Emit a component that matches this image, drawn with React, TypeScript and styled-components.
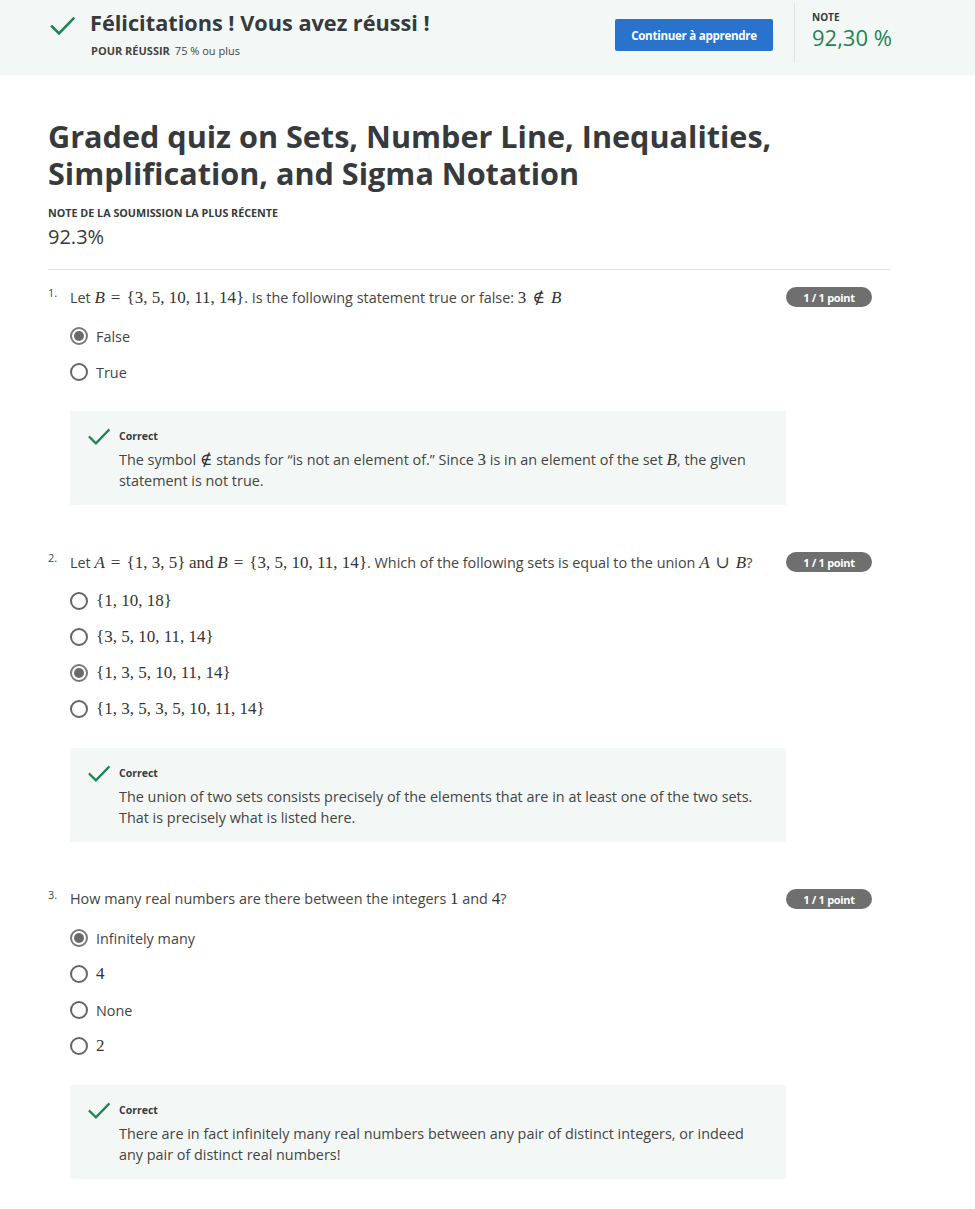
import React from "react";
import styled, { createGlobalStyle } from "styled-components";

const Global = createGlobalStyle`
  html, body { margin: 0; padding: 0; background: #fff; }
  body { font-family: "Open Sans", "Noto Sans", sans-serif; color: #373a3c; }
  * { box-sizing: border-box; }
`;

const Header = styled.header`
  height: 75px;
  background: #f3f8f6;
  display: flex;
  align-items: flex-start;
  padding-left: 50px;
`;

const HeaderLeft = styled.div`
  display: flex;
  align-items: flex-start;
  gap: 15px;
  padding-top: 14px;
  flex: 1;
`;

const CheckWrap = styled.div`
  padding-top: 2px;
`;

const HeaderTitle = styled.div`
  font-size: 21.7px;
  font-weight: 700;
  color: #373a3c;
  line-height: 18px;
`;

const HeaderSub = styled.div`
  margin-top: 11px;
  font-size: 11px;
  color: #444;
  display: flex;
  gap: 5px;
  padding-left: 1px;
  b { font-weight: 700; }
`;

const ContinueButton = styled.button`
  margin-top: 19px;
  width: 158px;
  height: 32px;
  border: none;
  border-radius: 2px;
  background: #2a73cc;
  color: #fff;
  font-family: "Open Sans", sans-serif;
  font-size: 11.6px;
  font-weight: 700;
  letter-spacing: -0.3px;
`;

const GradeBox = styled.div`
  margin-left: 21px;
  margin-top: 3px;
  height: 60px;
  width: 181px;
  border-left: 1px solid #dfe3e1;
  padding-left: 17px;
  padding-top: 8px;
  display: flex;
  flex-direction: column;
  gap: 2px;
`;

const GradeLabel = styled.div`
  font-size: 10px;
  font-weight: 700;
  color: #373a3c;
  line-height: 12px;
`;

const GradeValue = styled.div`
  font-size: 22px;
  color: #1f8354;
  line-height: 24px;
`;

const Main = styled.main`
  padding: 43px 85px 40px 48px;
`;

const Title = styled.h1`
  margin: 0;
  font-size: 30.6px;
  font-weight: 700;
  line-height: 37px;
  color: #373a3c;
`;

const SmallCaps = styled.div`
  margin-top: 14px;
  font-size: 10.75px;
  font-weight: 700;
  color: #373a3c;
`;

const Score = styled.div`
  font-size: 20px;
  line-height: 26px;
  margin-top: 4px;
  color: #373a3c;
`;

const Rule = styled.hr`
  border: none;
  border-top: 1px solid #e1e1e1;
  margin: 19px 0 0 0;
`;

const Question = styled.section<{ $first?: boolean }>`
  margin-top: ${(p) => (p.$first ? "17px" : "47px")};
  padding-right: 18px;
`;

const QRow = styled.div`
  display: flex;
  align-items: center;
  height: 20px;
`;

const QNum = styled.span`
  width: 22px;
  font-size: 11px;
  color: #444;
  align-self: flex-start;
  margin-top: -2px;
`;

const QText = styled.div`
  flex: 1;
  font-size: 14.4px;
  color: #444;
  white-space: nowrap;
`;

const Badge = styled.span`
  width: 86px;
  height: 20px;
  border-radius: 10px;
  background: #6f6f6f;
  color: #fff;
  font-size: 11px;
  font-weight: 700;
  display: flex;
  align-items: center;
  justify-content: center;
  letter-spacing: -0.3px;
`;

const Options = styled.div`
  margin-top: 20px;
  padding-left: 22px;
  display: flex;
  flex-direction: column;
  gap: 18px;
`;

const Option = styled.label`
  display: flex;
  align-items: center;
  gap: 8px;
  height: 18px;
  font-size: 14.4px;
  color: #444;
`;

const Radio = styled.span<{ $checked?: boolean }>`
  width: 18px;
  height: 18px;
  border-radius: 50%;
  border: 2px solid ${(p) => (p.$checked ? "#7a7a7a" : "#666")};
  display: flex;
  align-items: center;
  justify-content: center;
  flex-shrink: 0;
  &::after {
    content: "";
    width: 10px;
    height: 10px;
    border-radius: 50%;
    background: ${(p) => (p.$checked ? "#6a6a6a" : "transparent")};
  }
`;

const Feedback = styled.div`
  margin: 30px 0 0 22px;
  width: 716px;
  background: #f3f8f6;
  padding: 17px 18px 14px 18px;
  display: flex;
  gap: 9px;
`;

const FeedbackBody = styled.div`
  display: flex;
  flex-direction: column;
`;

const FeedbackLabel = styled.div`
  font-size: 10.5px;
  font-weight: 700;
  color: #373a3c;
  line-height: 14px;
  margin-top: 1px;
`;

const FeedbackText = styled.div`
  margin-top: 6px;
  font-size: 14.4px;
  line-height: 21px;
  color: #444;
`;

const M = styled.span`
  font-family: "Liberation Serif", "DejaVu Serif", serif;
  font-size: 17px;
  color: #333;
`;

const V = styled.i`
  font-family: "Liberation Serif", "DejaVu Serif", serif;
`;

const Op = styled.span`
  margin: 0 6px;
`;

const Check = ({ size = 24 }: { size?: number }) => (
  <svg width={size} height={size * 0.8} viewBox="0 0 25 20" fill="none">
    <path d="M2 10.5 L9 17.5 L23.5 2.5" stroke="#1f8354" strokeWidth="2.6" strokeLinecap="square" />
  </svg>
);

type Opt = { label: React.ReactNode; checked?: boolean };

const QuestionBlock = ({
  n,
  text,
  options,
  feedback,
  first,
}: {
  n: number;
  text: React.ReactNode;
  options: Opt[];
  feedback: React.ReactNode;
  first?: boolean;
}) => (
  <Question $first={first}>
    <QRow>
      <QNum>{n}.</QNum>
      <QText>{text}</QText>
      <Badge>1 / 1 point</Badge>
    </QRow>
    <Options>
      {options.map((o, i) => (
        <Option key={i}>
          <Radio $checked={o.checked} />
          {o.label}
        </Option>
      ))}
    </Options>
    <Feedback>
      <Check size={22} />
      <FeedbackBody>
        <FeedbackLabel>Correct</FeedbackLabel>
        <FeedbackText>{feedback}</FeedbackText>
      </FeedbackBody>
    </Feedback>
  </Question>
);

export default function App() {
  return (
    <>
      <Global />
      <Header>
        <HeaderLeft>
          <CheckWrap>
            <Check size={25} />
          </CheckWrap>
          <div>
            <HeaderTitle>Félicitations ! Vous avez réussi !</HeaderTitle>
            <HeaderSub>
              <b>POUR RÉUSSIR</b>
              <span>75 % ou plus</span>
            </HeaderSub>
          </div>
        </HeaderLeft>
        <ContinueButton>Continuer à apprendre</ContinueButton>
        <GradeBox>
          <GradeLabel>NOTE</GradeLabel>
          <GradeValue>92,30 %</GradeValue>
        </GradeBox>
      </Header>
      <Main>
        <Title>
          Graded quiz on Sets, Number Line, Inequalities,
          <br />
          Simplification, and Sigma Notation
        </Title>
        <SmallCaps>NOTE DE LA SOUMISSION LA PLUS RÉCENTE</SmallCaps>
        <Score>92.3%</Score>
        <Rule />

        <QuestionBlock
          first
          n={1}
          text={
            <>
              Let <M><V>B</V><Op>=</Op>{"{"}3, 5, 10, 11, 14{"}"}</M>. Is the following statement true or false:{" "}
              <M>3<Op>∉</Op><V>B</V></M>
            </>
          }
          options={[{ label: "False", checked: true }, { label: "True" }]}
          feedback={
            <>
              The symbol <M>∉</M> stands for “is not an element of.” Since <M>3</M> is in an element of the set{" "}
              <M><V>B</V></M>, the given
              <br />
              statement is not true.
            </>
          }
        />

        <QuestionBlock
          n={2}
          text={
            <>
              Let <M><V>A</V><Op>=</Op>{"{"}1, 3, 5{"}"}</M> <M>and</M> <M><V>B</V><Op>=</Op>{"{"}3, 5, 10, 11, 14{"}"}</M>. Which of the
              following sets is equal to the union <M><V>A</V><Op>∪</Op><V>B</V></M>?
            </>
          }
          options={[
            { label: <M>{"{"}1, 10, 18{"}"}</M> },
            { label: <M>{"{"}3, 5, 10, 11, 14{"}"}</M> },
            { label: <M>{"{"}1, 3, 5, 10, 11, 14{"}"}</M>, checked: true },
            { label: <M>{"{"}1, 3, 5, 3, 5, 10, 11, 14{"}"}</M> },
          ]}
          feedback={
            <>
              The union of two sets consists precisely of the elements that are in at least one of the two sets.
              <br />
              That is precisely what is listed here.
            </>
          }
        />

        <QuestionBlock
          n={3}
          text={
            <>
              How many real numbers are there between the integers <M>1</M> and <M>4</M>?
            </>
          }
          options={[
            { label: "Infinitely many", checked: true },
            { label: <M>4</M> },
            { label: "None" },
            { label: <M>2</M> },
          ]}
          feedback={
            <>
              There are in fact infinitely many real numbers between any pair of distinct integers, or indeed
              <br />
              any pair of distinct real numbers!
            </>
          }
        />
      </Main>
    </>
  );
}
